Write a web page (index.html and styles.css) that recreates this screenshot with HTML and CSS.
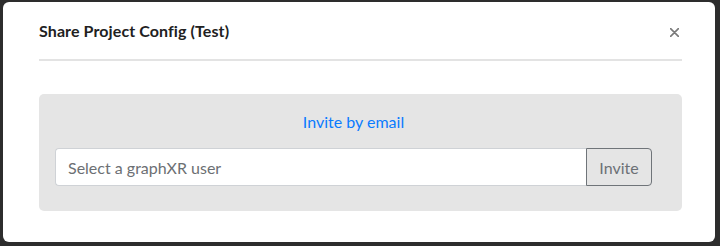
FILE: index.html
```html
<!DOCTYPE html>
<html>
<head>
<meta charset="utf-8">
<link rel="stylesheet" href="styles.css">
</head>
<body>
<div class="modal">
  <div class="modal-header">
    <div class="title">Share Project Config (Test)</div>
    <button class="close" aria-label="Close">
      <svg width="9" height="9" viewBox="0 0 9 9"><path d="M0.6 0.6 L8.4 8.4 M8.4 0.6 L0.6 8.4" stroke="#7a7a7a" stroke-width="1.6" stroke-linecap="round"/></svg>
    </button>
  </div>
  <div class="modal-body">
    <div class="panel">
      <div class="invite-link">Invite by email</div>
      <div class="input-group">
        <input class="user-input" type="text" placeholder="Select a graphXR user">
        <button class="invite-btn">Invite</button>
      </div>
    </div>
  </div>
</div>
</body>
</html>
```
FILE: styles.css
```css
html, body {
  margin: 0;
  padding: 0;
}
body {
  background: #2d2d2d;
  width: 720px;
  height: 246px;
  overflow: hidden;
  font-family: Lato, "Open Sans", sans-serif;
  padding-top: 2px;
  padding-left: 3px;
  box-sizing: border-box;
}
.modal {
  width: 712px;
  height: 240px;
  background: #fff;
  border-radius: 6px;
  padding: 0 33px 0 36px;
  box-sizing: border-box;
}
.modal-header {
  height: 57px;
  border-bottom: 2px solid #e3e3e3;
  display: flex;
  align-items: center;
  justify-content: space-between;
}
.title {
  font-size: 16px;
  font-weight: 700;
  line-height: 24px;
  letter-spacing: 0.1px;
  color: #212121;
}
.close {
  border: 0;
  background: transparent;
  padding: 0;
  margin-right: 3px;
  width: 9px;
  height: 9px;
  display: flex;
  margin-top: 3px;
}
.modal-body {
  padding-top: 33px;
}
.panel {
  background: #e5e5e5;
  border-radius: 5px;
  padding: 16px 30px 25px 16px;
}
.invite-link {
  text-align: center;
  color: #0a7bff;
  font-size: 16px;
  line-height: 24px;
  margin-bottom: 14px;
}
.input-group {
  display: flex;
  height: 38px;
}
.user-input {
  flex: 1;
  height: 38px;
  box-sizing: border-box;
  border: 1px solid #cfd2d6;
  border-right: 0;
  border-radius: 4px 0 0 4px;
  padding: 6px 12px;
  font-family: Lato, "Open Sans", sans-serif;
  font-size: 16px;
  color: #495057;
  background: #fff;
  outline: none;
}
.user-input::placeholder {
  color: #6c6f73;
}
.invite-btn {
  width: 66px;
  height: 38px;
  box-sizing: border-box;
  border: 1px solid #6f7479;
  border-radius: 0 4px 4px 0;
  background: transparent;
  color: #6c7075;
  font-family: Lato, "Open Sans", sans-serif;
  font-size: 16px;
  padding: 6px 12px;
}
```
